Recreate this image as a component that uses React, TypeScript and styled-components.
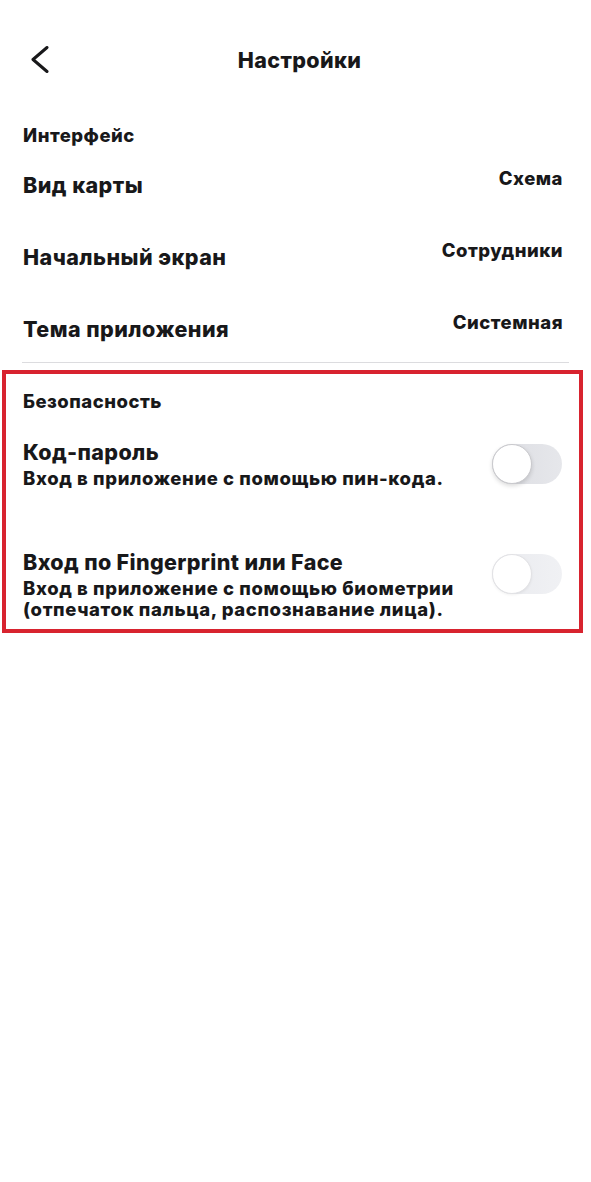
import React from "react";
import styled, { createGlobalStyle } from "styled-components";

const GlobalStyle = createGlobalStyle`
  html, body {
    margin: 0;
    padding: 0;
    background: #ffffff;
  }
  body {
    font-family: Inter, "Noto Sans", "Liberation Sans", sans-serif;
    color: #18181a;
    -webkit-font-smoothing: antialiased;
  }
  * { box-sizing: border-box; }
`;

const Screen = styled.div`
  width: 591px;
  min-height: 1182px;
  display: flex;
  flex-direction: column;
  background: #ffffff;
`;

const Header = styled.header`
  display: grid;
  grid-template-columns: 1fr auto 1fr;
  align-items: center;
  padding: 46px 23px 0 31px;
`;

const BackButton = styled.button`
  justify-self: start;
  display: flex;
  align-items: center;
  padding: 0;
  margin: 0;
  border: none;
  background: none;
  color: #18181a;
  cursor: pointer;
`;

const Title = styled.h1`
  margin: 0;
  font-size: 21.5px;
  line-height: 26px;
  font-weight: 800;
  letter-spacing: 0.35px;
`;

const Content = styled.main`
  display: flex;
  flex-direction: column;
  padding: 0 22px 0 23px;
  margin-top: 50px;
`;

const SectionTitle = styled.h2`
  margin: 0;
  font-size: 18.5px;
  line-height: 22px;
  font-weight: 800;
  letter-spacing: 0.5px;
`;

const OptionList = styled.div`
  display: flex;
  flex-direction: column;
  gap: 41px;
  margin-top: 21px;
  padding-right: 6px;
`;

const OptionRow = styled.div`
  display: flex;
  justify-content: space-between;
  align-items: flex-start;
`;

const OptionLabel = styled.span`
  margin-top: 5px;
  font-size: 21.5px;
  line-height: 26px;
  font-weight: 800;
  letter-spacing: 0.45px;
`;

const OptionValue = styled.span`
  font-size: 18.5px;
  line-height: 22px;
  font-weight: 800;
  letter-spacing: 0.5px;
`;

const Divider = styled.hr`
  margin: 20px 0 0 -1px;
  border: none;
  height: 1px;
  background: #dcdcdf;
`;

const SecurityBox = styled.section`
  display: flex;
  flex-direction: column;
  margin: 7px 0 0 2px;
  width: 581px;
  border: 4px solid #d8232f;
  padding: 16px 17px 9px 17px;
`;

const ToggleList = styled.div`
  display: flex;
  flex-direction: column;
  gap: 60px;
  margin-top: 27px;
`;

const ToggleRow = styled.div`
  display: flex;
  justify-content: space-between;
  align-items: flex-start;
  gap: 8px;
`;

const ToggleText = styled.div`
  display: flex;
  flex-direction: column;
  gap: 3px;
`;

const ToggleTitle = styled.span`
  font-size: 21.5px;
  line-height: 26px;
  font-weight: 800;
  letter-spacing: 0.35px;
`;

const ToggleHint = styled.span`
  font-size: 18.5px;
  line-height: 21px;
  font-weight: 800;
  letter-spacing: 0.6px;
  white-space: nowrap;
`;

const Track = styled.span<{ $muted?: boolean }>`
  flex: none;
  display: flex;
  align-items: center;
  width: 70px;
  height: 40px;
  margin-top: 5px;
  border-radius: 20px;
  background: ${(p) =>
    p.$muted
      ? "linear-gradient(90deg, #e9eaee 0%, #f0f1f4 100%)"
      : "linear-gradient(90deg, #dcdde2 0%, #e6e7eb 100%)"};
`;

const Knob = styled.span<{ $muted?: boolean }>`
  width: 40px;
  height: 40px;
  border-radius: 50%;
  background: #ffffff;
  border: 1px solid ${(p) => (p.$muted ? "#e2e2e5" : "#c9c9cd")};
  box-shadow: ${(p) =>
    p.$muted ? "0 1px 3px rgba(0,0,0,0.06)" : "0 2px 4px rgba(0,0,0,0.14)"};
`;

const ChevronLeft = () => (
  <svg width="18" height="28" viewBox="0 0 18 28" fill="none">
    <polyline
      points="16,1.5 2,13.5 16,25.5"
      stroke="currentColor"
      strokeWidth="3"
      strokeLinecap="round"
      strokeLinejoin="round"
    />
  </svg>
);

const Toggle = ({ muted }: { muted?: boolean }) => (
  <Track $muted={muted} role="switch" aria-checked={false}>
    <Knob $muted={muted} />
  </Track>
);

const options = [
  { label: "Вид карты", value: "Схема" },
  { label: "Начальный экран", value: "Сотрудники" },
  { label: "Тема приложения", value: "Системная" },
];

export default function App() {
  return (
    <>
      <GlobalStyle />
      <Screen>
        <Header>
          <BackButton aria-label="Назад">
            <ChevronLeft />
          </BackButton>
          <Title>Настройки</Title>
          <span />
        </Header>
        <Content>
          <SectionTitle>Интерфейс</SectionTitle>
          <OptionList>
            {options.map((o) => (
              <OptionRow key={o.label}>
                <OptionLabel>{o.label}</OptionLabel>
                <OptionValue>{o.value}</OptionValue>
              </OptionRow>
            ))}
          </OptionList>
          <Divider />
        </Content>
        <SecurityBox>
          <SectionTitle>Безопасность</SectionTitle>
          <ToggleList>
            <ToggleRow>
              <ToggleText>
                <ToggleTitle>Код-пароль</ToggleTitle>
                <ToggleHint>Вход в приложение с помощью пин-кода.</ToggleHint>
              </ToggleText>
              <Toggle />
            </ToggleRow>
            <ToggleRow>
              <ToggleText>
                <ToggleTitle>Вход по Fingerprint или Face</ToggleTitle>
                <ToggleHint>
                  Вход в приложение с помощью биометрии
                  <br />
                  (отпечаток пальца, распознавание лица).
                </ToggleHint>
              </ToggleText>
              <Toggle muted />
            </ToggleRow>
          </ToggleList>
        </SecurityBox>
      </Screen>
    </>
  );
}
